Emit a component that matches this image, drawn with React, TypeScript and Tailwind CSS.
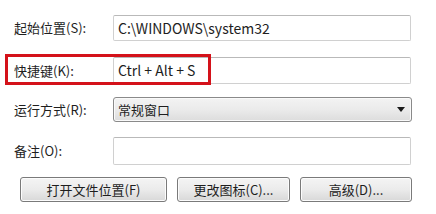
import React from 'react';

const font = { fontFamily: '"Noto Sans CJK SC", "Noto Sans", sans-serif' };

function Label({ children }: { children: React.ReactNode }) {
  return <div className="w-[113px] shrink-0 pl-[14px] text-[13px] text-[#1e1e1e]">{children}</div>;
}

function TextBox({ value, h }: { value?: string; h: string }) {
  return (
    <div
      className={`w-[298px] ${h} flex items-center border border-[#d0d0d0] border-t-[#b9b9b9] rounded-[2px] bg-white pl-[4px] text-[14px] text-[#1e1e1e]`}
    >
      {value}
    </div>
  );
}

function Button({ label, w }: { label: string; w: string }) {
  return (
    <button
      className={`${w} h-[25px] flex items-center justify-center border border-[#7a7a7a] rounded-[3px] bg-gradient-to-b from-[#f4f4f4] via-[#ebebeb] to-[#d8d8d8] text-[13px] text-[#1e1e1e] shadow-[inset_0_0_0_1px_#fcfcfc]`}
    >
      {label}
    </button>
  );
}

export default function App() {
  return (
    <div className="relative w-[436px] h-[214px] bg-white overflow-hidden" style={font}>
      <div className="flex flex-col pt-[15px]">
        <div className="flex items-center">
          <Label>起始位置(S):</Label>
          <TextBox value="C:\WINDOWS\system32" h="h-[26px]" />
        </div>
        <div className="flex items-center mt-[16px]">
          <Label>快捷键(K):</Label>
          <TextBox value="Ctrl + Alt + S" h="h-[27px]" />
        </div>
        <div className="flex items-center mt-[13px]">
          <Label>运行方式(R):</Label>
          <div className="w-[299px] h-[25px] flex items-center justify-between border border-[#8a8a8a] rounded-[3px] bg-gradient-to-b from-[#f3f3f3] via-[#ebebeb] to-[#dcdcdc] pl-[4px] pr-[6px] text-[13px] text-[#1e1e1e] shadow-[inset_0_0_0_1px_#fafafa]">
            <span>常规窗口</span>
            <svg width="8" height="5" viewBox="0 0 8 5">
              <path d="M0 0 H8 L4 5 Z" fill="#1a1a1a" />
            </svg>
          </div>
        </div>
        <div className="flex items-center mt-[15px]">
          <Label>备注(O):</Label>
          <TextBox h="h-[28px]" />
        </div>
        <div className="flex items-center gap-[10px] mt-[12px] pl-[20px]">
          <Button label="打开文件位置(F)" w="w-[147px]" />
          <Button label="更改图标(C)..." w="w-[113px]" />
          <Button label="高级(D)..." w="w-[112px]" />
        </div>
      </div>
      <div className="absolute left-[5px] top-[54px] w-[206px] h-[31px] border-[3px] border-[#d4121a]" />
    </div>
  );
}
